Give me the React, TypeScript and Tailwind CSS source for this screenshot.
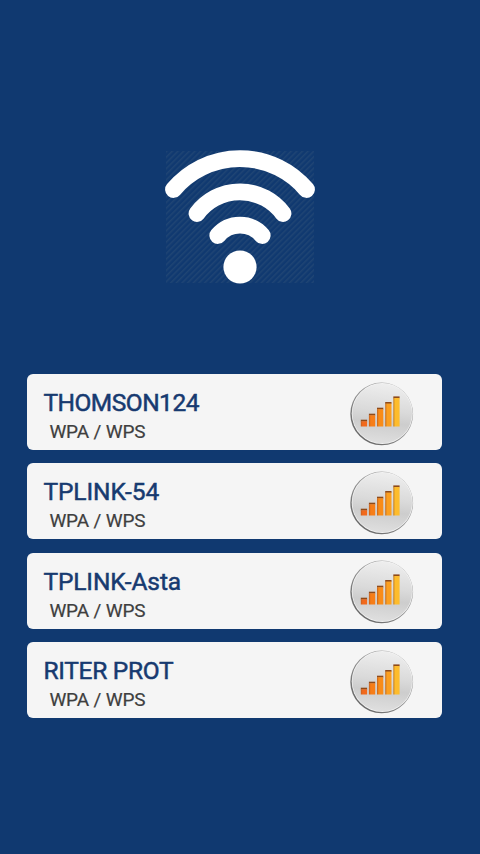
const networks = [
  { name: "THOMSON124", security: "WPA / WPS", tracking: "tracking-[-0.5px]" },
  { name: "TPLINK-54", security: "WPA / WPS", tracking: "tracking-[-0.05px]" },
  { name: "TPLINK-Asta", security: "WPA / WPS", tracking: "tracking-[-0.1px]" },
  { name: "RITER PROT", security: "WPA / WPS", tracking: "tracking-[-0.3px]" },
];

// x, top and fill of each signal bar; they all stand on y = 44.5
const bars = [
  { x: 10.8, top: 38.5, fill: "url(#bar-1)" },
  { x: 18.9, top: 32.5, fill: "url(#bar-2)" },
  { x: 27, top: 26.5, fill: "url(#bar-3)" },
  { x: 35.2, top: 20.8, fill: "url(#bar-4)" },
  { x: 43.3, top: 15.2, fill: "url(#bar-5)" },
];

const barColors = [
  { id: "bar-1", from: "#c4601f", to: "#f2691c" },
  { id: "bar-2", from: "#c4601f", to: "#f77e18" },
  { id: "bar-3", from: "#c4641f", to: "#f98c18" },
  { id: "bar-4", from: "#c46c20", to: "#fb9f20" },
  { id: "bar-5", from: "#c47c24", to: "#fdbc2c" },
];

function WifiLogo() {
  return (
    <svg width="152" height="136" viewBox="164 149 152 136" fill="none" aria-hidden="true">
      <defs>
        <pattern
          id="hatch"
          width="4"
          height="4"
          patternUnits="userSpaceOnUse"
          patternTransform="rotate(45)"
        >
          <rect width="1.5" height="4" fill="#264a76" />
        </pattern>
      </defs>
      <rect x="166" y="151" width="148" height="132" fill="url(#hatch)" opacity="0.7" />
      <g stroke="#fff" strokeWidth="16.8" strokeLinecap="round">
        <path d="M173.5 189.5A87 87 0 0 1 306.5 189.5" />
        <path d="M197 213.5A53.5 53.5 0 0 1 283 213.5" />
        <path d="M217.8 235.5A29 29 0 0 1 262.2 235.5" />
      </g>
      <circle cx="240" cy="267" r="16.6" fill="#fff" />
    </svg>
  );
}

function SignalIcon() {
  return (
    <svg className="mt-[3px] shrink-0" width="64" height="64" viewBox="0 0 64 64" aria-hidden="true">
      <defs>
        <linearGradient id="disc" x1="0.55" y1="0" x2="0.45" y2="1">
          <stop offset="0" stopColor="#eeeeee" />
          <stop offset="0.45" stopColor="#dadada" />
          <stop offset="0.65" stopColor="#cdcdcd" />
          <stop offset="1" stopColor="#dfdfdf" />
        </linearGradient>
        <linearGradient id="rim" x1="0.85" y1="0.1" x2="0.15" y2="0.9">
          <stop offset="0" stopColor="#b4b4b4" />
          <stop offset="0.5" stopColor="#919191" />
          <stop offset="1" stopColor="#666" />
        </linearGradient>
        {barColors.map((color) => (
          <linearGradient key={color.id} id={color.id}>
            <stop offset="0" stopColor={color.from} />
            <stop offset="0.3" stopColor={color.to} />
          </linearGradient>
        ))}
      </defs>
      <circle cx="31.7" cy="31.9" r="31.4" fill="url(#rim)" />
      <circle cx="32.2" cy="31.5" r="30.5" fill="#f3f3f3" />
      <circle cx="32.2" cy="31.5" r="29.8" fill="url(#disc)" />
      {bars.map((bar) => (
        <g key={bar.x}>
          <rect x={bar.x} y={bar.top - 0.8} width="6.3" height="1.9" fill="#8f4a18" />
          <rect x={bar.x} y={bar.top + 0.8} width="6.3" height={43.7 - bar.top} fill={bar.fill} />
        </g>
      ))}
    </svg>
  );
}

export default function App() {
  return (
    <div className="flex h-[854px] w-[480px] flex-col items-center overflow-hidden bg-[#103970] pt-[149px] font-['Roboto',sans-serif]">
      <WifiLogo />
      <ul className="mt-[89px] flex w-full flex-col gap-[13.4px] pr-[38px] pl-[27.4px]">
        {networks.map((network) => (
          <li
            key={network.name}
            className="flex h-[76px] items-center justify-between rounded-md bg-[#f5f5f5] pr-7 pl-4"
          >
            <div className="pt-2.5">
              <h2
                className={`text-[24.5px] leading-[30px] font-normal text-[#173a70] [-webkit-text-stroke:0.5px_#173a70] ${network.tracking}`}
              >
                {network.name}
              </h2>
              <p className="pl-1.5 text-[19px] leading-7 tracking-[-0.15px] text-[#3f3f3f] [-webkit-text-stroke:0.2px_#3f3f3f]">
                {network.security}
              </p>
            </div>
            <SignalIcon />
          </li>
        ))}
      </ul>
    </div>
  );
}
